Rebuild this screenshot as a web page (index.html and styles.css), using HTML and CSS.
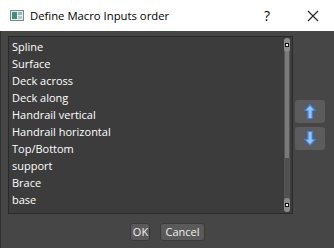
FILE: index.html
```html
<!DOCTYPE html>
<html lang="en">
<head>
  <meta charset="UTF-8">
  <title>Define Macro Inputs order</title>
  <link rel="stylesheet" href="styles.css">
</head>
<body>
<div class="dialog">
  <div class="titlebar">
    <svg class="app-icon" width="14" height="11" viewBox="0 0 14 11">
      <rect x="0.5" y="0.5" width="13" height="10" fill="#e8ecec" stroke="#7a8a8a"/>
      <rect x="2" y="2" width="5" height="7" fill="#3f8f7a"/>
      <rect x="8" y="2" width="4" height="3" fill="#9ab4b8"/>
      <rect x="8" y="6" width="4" height="3" fill="#b8c8cc"/>
    </svg>
    <span class="title">Define Macro Inputs order</span>
    <span class="help">?</span>
    <svg class="close" width="12" height="12" viewBox="0 0 12 12">
      <path d="M1 1 L11 11 M11 1 L1 11" stroke="#222" stroke-width="1.1"/>
    </svg>
  </div>
  <div class="content">
    <div class="main">
      <div class="list">
        <ul class="items">
          <li>Spline</li>
          <li>Surface</li>
          <li>Deck across</li>
          <li>Deck along</li>
          <li>Handrail vertical</li>
          <li>Handrail horizontal</li>
          <li>Top/Bottom</li>
          <li>support</li>
          <li>Brace</li>
          <li>base</li>
        </ul>
        <div class="scrollbar">
          <div class="cap"><span class="dot"></span></div>
          <div class="thumb"></div>
          <div class="track"></div>
          <div class="cap"><span class="dot"></span></div>
        </div>
      </div>
      <div class="side">
        <button class="move-button">
          <svg width="14" height="17" viewBox="0 0 14 17">
            <path d="M7 1 L13.5 8 L9.8 8 L9.8 16 L4.2 16 L4.2 8 L0.5 8 Z" fill="#3d82e4"/>
            <path d="M7 2.8 L11 7.2 L8.6 7.2 L8.6 15 L5.6 15 L5.6 7.2 L3 7.2 Z" fill="#93c6ff"/>
          </svg>
        </button>
        <button class="move-button">
          <svg width="14" height="17" viewBox="0 0 14 17">
            <path d="M7 16 L13.5 9 L9.8 9 L9.8 1 L4.2 1 L4.2 9 L0.5 9 Z" fill="#3d82e4"/>
            <path d="M7 14.2 L11 9.8 L8.6 9.8 L8.6 2 L5.6 2 L5.6 9.8 L3 9.8 Z" fill="#93c6ff"/>
          </svg>
        </button>
      </div>
    </div>
    <div class="footer">
      <button class="dlg-button ok">OK</button>
      <button class="dlg-button">Cancel</button>
    </div>
  </div>
</div>
</body>
</html>
```

FILE: styles.css
```css
body {
  margin: 0;
  font-family: "Open Sans", "Noto Sans", Arial, sans-serif;
  font-size: 11px;
  background-color: #464646;
}

.dialog {
  width: 334px;
  height: 248px;
  display: flex;
  flex-direction: column;
  background-color: #464646;
}

.titlebar {
  height: 31px;
  flex: none;
  background-color: #ffffff;
  display: flex;
  align-items: center;
  color: #000;
}

.app-icon {
  margin-left: 10px;
  margin-right: 6px;
}

.title {
  font-size: 11.3px;
  flex: 1;
}

.help {
  font-size: 14px;
  margin-right: 37px;
}

.close {
  margin-right: 15px;
}

.content {
  flex: 1;
  padding: 5px 7px 0 7px;
  display: flex;
  flex-direction: column;
  border-left: 1px solid #2f2f2f;
}

.main {
  display: flex;
}

.list {
  width: 283px;
  height: 176px;
  background-color: #3c3c3c;
  border: 1px solid #2a2a2a;
  display: flex;
}

.items {
  list-style: none;
  margin: 0;
  padding: 1px 0 0 3px;
  flex: 1;
  color: #ffffff;
}

.items li {
  height: 17px;
  line-height: 17px;
  white-space: nowrap;
}

.scrollbar {
  width: 6px;
  margin: 1px 2px 1px 0;
  display: flex;
  flex-direction: column;
  background-color: #555;
  border-radius: 3px;
}

.cap {
  height: 14px;
  background-color: #8a8a8a;
  border-radius: 3px;
  display: flex;
  align-items: center;
  justify-content: center;
}

.dot {
  width: 2px;
  height: 2px;
  background-color: #fff;
  box-shadow: 0 0 0 1px #111;
}

.thumb {
  flex: 1;
  background-color: #7a7a7a;
  margin: 0 1px;
}

.track {
  height: 40px;
  background-color: #505050;
  margin: 0 1px;
}

.side {
  flex: 1;
  display: flex;
  flex-direction: column;
  align-items: center;
  padding-top: 64px;
  gap: 4px;
}

.move-button {
  width: 30px;
  height: 23px;
  padding: 0;
  border: none;
  border-radius: 3px;
  background-color: #5c5c5c;
  display: flex;
  align-items: center;
  justify-content: center;
}

.footer {
  display: flex;
  justify-content: center;
  gap: 10px;
  padding-top: 9px;
}

.dlg-button {
  height: 18px;
  padding: 0 4px;
  border: 1px solid #3a3a3a;
  border-radius: 3px;
  background-color: #5a5a5a;
  color: #f0f0f0;
  font-family: "Open Sans", "Noto Sans", Arial, sans-serif;
  font-size: 11px;
  line-height: 16px;
}

.dlg-button.ok {
  width: 20px;
  padding: 0;
}
```
